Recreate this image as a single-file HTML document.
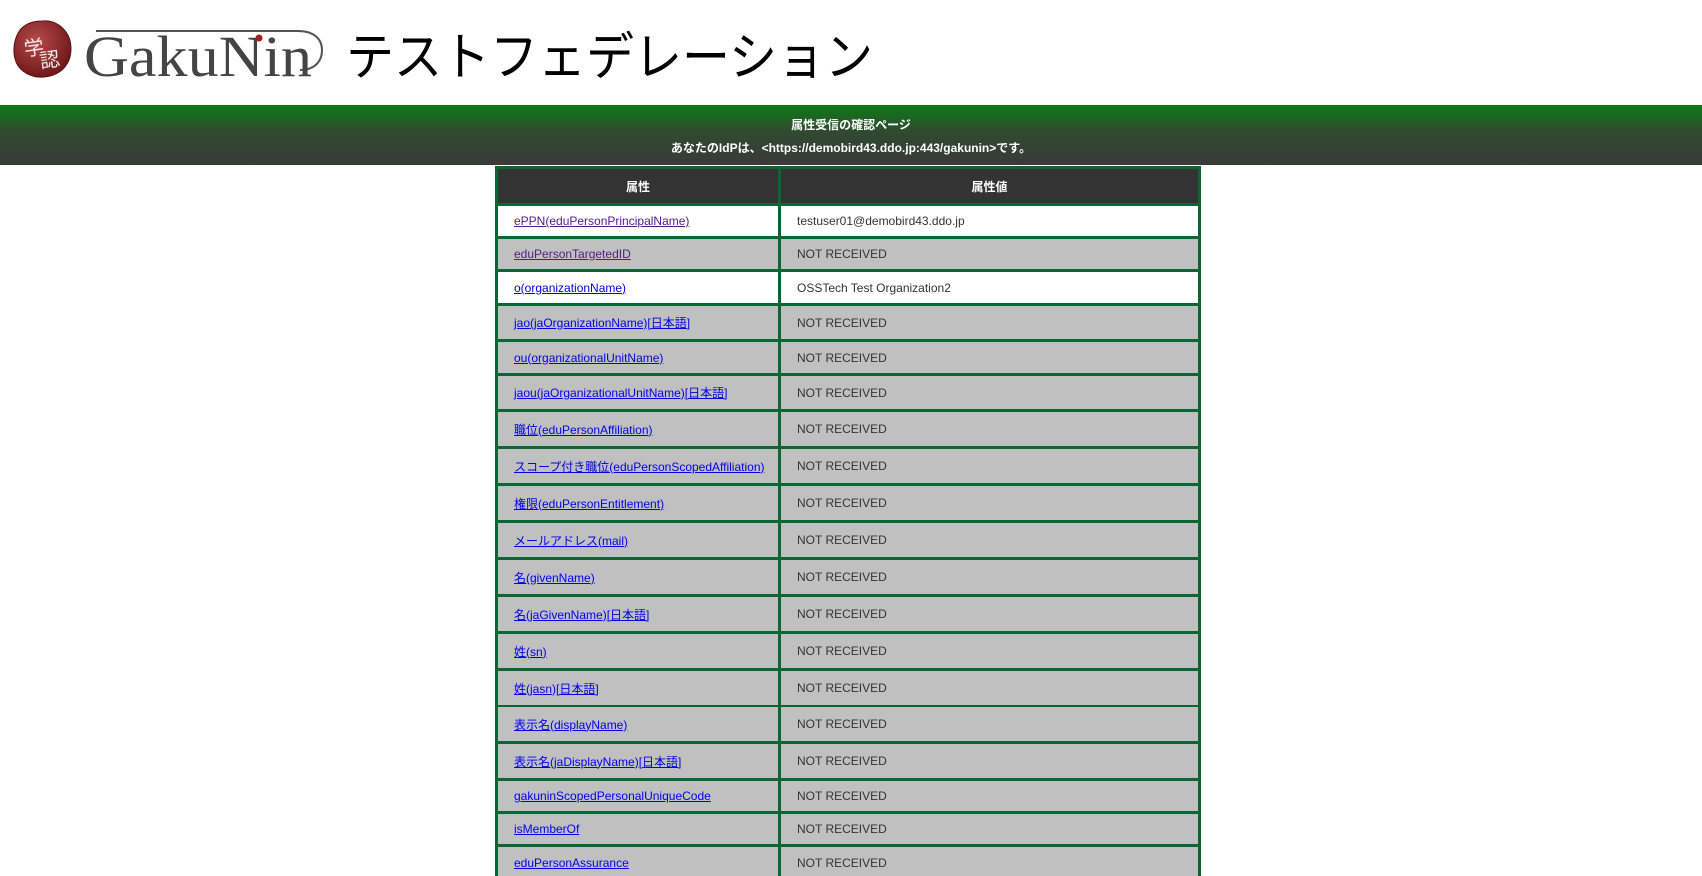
<!DOCTYPE html>
<html style="overflow:hidden;height:876px"><head><meta charset="utf-8"><style>
*{margin:0;padding:0;box-sizing:border-box}
body{width:1702px;height:876px;overflow:hidden;background:#fff;font-family:"Liberation Sans","Noto Sans CJK JP",sans-serif;position:relative}
.title{position:absolute;left:346px;top:24px;font-size:48px;color:#000;font-family:"Liberation Sans","Noto Sans CJK JP",sans-serif;line-height:64px;transform:scaleY(1.08);transform-origin:0 0}
.band{position:absolute;left:0;top:105px;width:1702px;height:60px;background:linear-gradient(#0d7a15,#2f4a30 45%,#3a3a3a);color:#fff;font-weight:bold;font-size:12px;text-align:center}
.band div{position:absolute;left:0;width:100%}
.tbl{position:absolute;left:495px;top:166px;width:706px;height:710px;background:#0b6634;overflow:hidden}
.c{position:absolute;display:flex;align-items:center;font-size:12px;color:#333;white-space:nowrap}
.l{left:3px;width:280px;padding-left:16px}
.r{left:286px;width:417px;padding-left:16px}
.h{background:#333;color:#fff;font-weight:bold;justify-content:center;padding-left:0}
.w{background:#fff}.g{background:#c0c0c0}
a{color:#00e;text-decoration:underline}
a.v{color:#551a8b}
</style></head><body>
<svg style="position:absolute;left:10px;top:18px" width="315" height="64" viewBox="0 0 315 64">
<defs><radialGradient id="rg" cx="40%" cy="35%" r="70%"><stop offset="0" stop-color="#b84a4a"/><stop offset="1" stop-color="#6a1515"/></radialGradient></defs>
<path d="M32 3 C42 2 50 6 56 14 C62 22 62 34 59 42 C55 52 46 58 34 59 C22 60 10 54 6 44 C2 34 4 20 10 12 C16 5 24 3 32 3Z" fill="url(#rg)" stroke="#5a1010" stroke-width="1"/>
<text x="14" y="36" font-size="20" fill="#f2e6e6" font-family="Noto Sans CJK JP" transform="rotate(-8 30 30)">学</text>
<text x="28" y="50" font-size="20" fill="#f2e6e6" font-family="Noto Sans CJK JP" transform="rotate(-8 30 30)">認</text>
<path d="M86 13 L288 13 C304 13 312 21 312 32 C312 44 304 52 290 52" fill="none" stroke="#555" stroke-width="2"/>
<text x="74" y="58" font-size="58" fill="#444" font-family="Liberation Serif" textLength="228" lengthAdjust="spacingAndGlyphs">GakuNin</text>
<circle cx="249" cy="20" r="3.5" fill="#a02020"/>
</svg>
<div class="title">テストフェデレーション</div>
<div class="band"><div style="top:11px">属性受信の確認ページ</div><div style="top:34px">あなたのIdPは、&lt;https://demobird43.ddo.jp:443/gakunin&gt;です。</div></div>
<div class="tbl">
<div class="c l h" style="top:3px;height:34px">属性</div><div class="c r h" style="top:3px;height:34px">属性値</div>
<div class="c l w" style="top:40px;height:30px"><a class="v">ePPN(eduPersonPrincipalName)</a></div><div class="c r w" style="top:40px;height:30px">testuser01@demobird43.ddo.jp</div>
<div class="c l g" style="top:73px;height:30px"><a class="v">eduPersonTargetedID</a></div><div class="c r g" style="top:73px;height:30px">NOT RECEIVED</div>
<div class="c l w" style="top:106px;height:31px"><a>o(organizationName)</a></div><div class="c r w" style="top:106px;height:31px">OSSTech Test Organization2</div>
<div class="c l g" style="top:140px;height:33px"><a>jao(jaOrganizationName)[日本語]</a></div><div class="c r g" style="top:140px;height:33px">NOT RECEIVED</div>
<div class="c l g" style="top:176px;height:31px"><a>ou(organizationalUnitName)</a></div><div class="c r g" style="top:176px;height:31px">NOT RECEIVED</div>
<div class="c l g" style="top:210px;height:33px"><a>jaou(jaOrganizationalUnitName)[日本語]</a></div><div class="c r g" style="top:210px;height:33px">NOT RECEIVED</div>
<div class="c l g" style="top:246px;height:34px"><a>職位(eduPersonAffiliation)</a></div><div class="c r g" style="top:246px;height:34px">NOT RECEIVED</div>
<div class="c l g" style="top:283px;height:34px"><a>スコープ付き職位(eduPersonScopedAffiliation)</a></div><div class="c r g" style="top:283px;height:34px">NOT RECEIVED</div>
<div class="c l g" style="top:320px;height:34px"><a>権限(eduPersonEntitlement)</a></div><div class="c r g" style="top:320px;height:34px">NOT RECEIVED</div>
<div class="c l g" style="top:357px;height:34px"><a>メールアドレス(mail)</a></div><div class="c r g" style="top:357px;height:34px">NOT RECEIVED</div>
<div class="c l g" style="top:394px;height:34px"><a>名(givenName)</a></div><div class="c r g" style="top:394px;height:34px">NOT RECEIVED</div>
<div class="c l g" style="top:431px;height:34px"><a>名(jaGivenName)[日本語]</a></div><div class="c r g" style="top:431px;height:34px">NOT RECEIVED</div>
<div class="c l g" style="top:468px;height:34px"><a>姓(sn)</a></div><div class="c r g" style="top:468px;height:34px">NOT RECEIVED</div>
<div class="c l g" style="top:505px;height:34px"><a>姓(jasn)[日本語]</a></div><div class="c r g" style="top:505px;height:34px">NOT RECEIVED</div>
<div class="c l g" style="top:541px;height:34px"><a>表示名(displayName)</a></div><div class="c r g" style="top:541px;height:34px">NOT RECEIVED</div>
<div class="c l g" style="top:578px;height:34px"><a>表示名(jaDisplayName)[日本語]</a></div><div class="c r g" style="top:578px;height:34px">NOT RECEIVED</div>
<div class="c l g" style="top:615px;height:30px"><a>gakuninScopedPersonalUniqueCode</a></div><div class="c r g" style="top:615px;height:30px">NOT RECEIVED</div>
<div class="c l g" style="top:648px;height:30px"><a>isMemberOf</a></div><div class="c r g" style="top:648px;height:30px">NOT RECEIVED</div>
<div class="c l g" style="top:681px;height:32px"><a>eduPersonAssurance</a></div><div class="c r g" style="top:681px;height:32px">NOT RECEIVED</div>
</div>
</body></html>
